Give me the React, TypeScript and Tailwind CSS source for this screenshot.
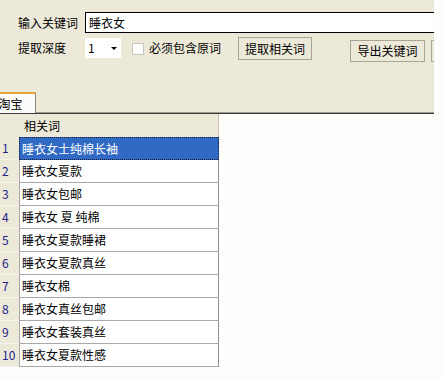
const words = [
  '睡衣女士纯棉长袖',
  '睡衣女夏款',
  '睡衣女包邮',
  '睡衣女 夏 纯棉',
  '睡衣女夏款睡裙',
  '睡衣女夏款真丝',
  '睡衣女棉',
  '睡衣女真丝包邮',
  '睡衣女套装真丝',
  '睡衣女夏款性感',
]

const font = { fontFamily: '"Noto Sans CJK SC", "Liberation Sans", sans-serif' }

function XpButton({ label, className }: { label: string; className: string }) {
  return (
    <button
      className={`flex shrink-0 items-center justify-center whitespace-nowrap border border-[#a8a596] bg-[#ECE9D8] text-[12px] text-black ${className}`}
    >
      {label}
    </button>
  )
}

export default function App() {
  return (
    <div className="relative h-[379px] w-[443px] overflow-hidden bg-[#fdfdfb] text-[12px] text-black" style={font}>
      <div className="flex h-[114px] w-[434px] flex-col overflow-hidden bg-[#ECE9D8]">
        {/* keyword row */}
        <div className="mt-[12px] flex h-[21px] items-center">
          <span className="ml-[18px] w-[67px] shrink-0 whitespace-nowrap leading-none">输入关键词</span>
          <div className="flex h-[21px] w-[360px] shrink-0 items-center border border-black bg-white pl-[3px] leading-none">
            睡衣女
          </div>
        </div>

        {/* options row */}
        <div className="mt-[4px] flex h-[25px] items-start">
          <span className="ml-[18px] mt-[5px] w-[67px] shrink-0 whitespace-nowrap leading-none">提取深度</span>
          <div className="mt-[1px] flex h-[20px] w-[36px] shrink-0 items-center justify-between bg-white pl-[3px] pr-[4px]">
            <span className="leading-none">1</span>
            <span className="h-0 w-0 border-x-[3px] border-t-[3px] border-x-transparent border-t-black" />
          </div>
          <div className="ml-[11px] mt-[6px] h-[12px] w-[12px] shrink-0 border border-[#c9c7ba] bg-white" />
          <span className="ml-[5px] mt-[5px] w-[72px] shrink-0 whitespace-nowrap leading-none">必须包含原词</span>
          <XpButton label="提取相关词" className="ml-[17px] h-[23px] w-[74px]" />
          <XpButton label="导出关键词" className="ml-[38px] mt-[3px] h-[22px] w-[75px]" />
          <XpButton label="" className="ml-[6px] mt-[3px] h-[22px] w-[20px]" />
        </div>

        {/* tab strip */}
        <div className="mt-auto flex items-end">
          <div className="-ml-[14px] flex h-[21px] w-[50px] shrink-0 items-center justify-center whitespace-nowrap border-t-2 border-r border-t-[#E8A33C] border-r-[#8d8b80] bg-[#fcfcfa] leading-none">
            淘宝
          </div>
          <div className="h-[1px] flex-1 bg-[#9d9a8c]" />
        </div>
        <div className="h-[1px] w-full bg-[#3c3c3c]" />
      </div>

      {/* grid */}
      <div className="w-[219px]">
        <div className="flex h-[23px] bg-[#ECE9D8]">
          <div className="w-[19px]" />
          <div className="flex flex-1 items-center border-r border-[#c4c2b6] pl-[5px] leading-none">相关词</div>
        </div>
        {words.map((w, i) => (
          <div key={i} className="flex h-[23px]">
            <div className="flex w-[19px] items-center border-b border-[#f4f3ee] bg-[#ECE9D8] pl-[2px] leading-none text-[#22228e]">
              {i + 1}
            </div>
            {i === 0 ? (
              <div className="flex flex-1 items-center whitespace-pre border border-dotted border-[#1a1a30] bg-[#316AC5] pl-[2px] leading-none text-white">
                {w}
              </div>
            ) : (
              <div className="flex flex-1 items-center whitespace-pre border-b border-l border-r border-b-[#a9a9a9] border-l-[#a9a9a9] border-r-[#8f8f8f] bg-white pl-[2px] leading-none">
                {w}
              </div>
            )}
          </div>
        ))}
      </div>
    </div>
  )
}
